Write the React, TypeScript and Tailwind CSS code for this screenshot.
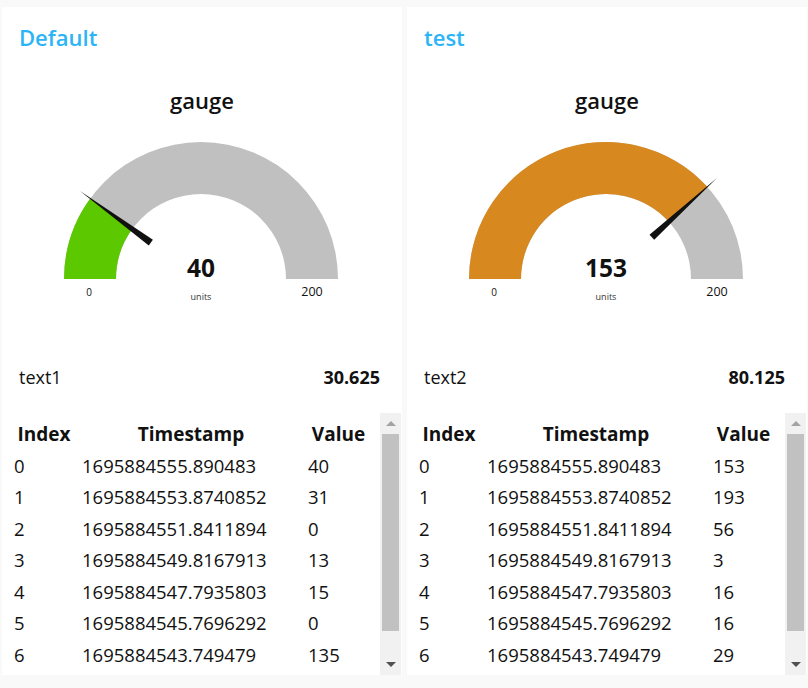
import React from 'react';

type Row = { index: number; ts: string; value: number };

type Panel = {
  title: string;
  value: number;
  color: string;
  label: string;
  reading: string;
  rows: Row[];
};

const stamps = [
  '1695884555.890483',
  '1695884553.8740852',
  '1695884551.8411894',
  '1695884549.8167913',
  '1695884547.7935803',
  '1695884545.7696292',
  '1695884543.749479',
];

const panels: Panel[] = [
  {
    title: 'Default',
    value: 40,
    color: '#5cc800',
    label: 'text1',
    reading: '30.625',
    rows: [40, 31, 0, 13, 15, 0, 135].map((v, i) => ({ index: i, ts: stamps[i], value: v })),
  },
  {
    title: 'test',
    value: 153,
    color: '#d78920',
    label: 'text2',
    reading: '80.125',
    rows: [153, 193, 56, 3, 16, 16, 29].map((v, i) => ({ index: i, ts: stamps[i], value: v })),
  },
];

const font = { fontFamily: '"Open Sans", "Noto Sans", sans-serif' };

const Gauge: React.FC<{ value: number; color: string }> = ({ value, color }) => {
  const cx = 199;
  const cy = 146;
  const R = 137;
  const r = 85;
  const arc = (frac: number) => {
    const a = frac * Math.PI;
    const ox = cx - R * Math.cos(a);
    const oy = cy - R * Math.sin(a);
    const ix = cx - r * Math.cos(a);
    const iy = cy - r * Math.sin(a);
    return `M ${cx - R} ${cy} A ${R} ${R} 0 0 1 ${ox} ${oy} L ${ix} ${iy} A ${r} ${r} 0 0 0 ${cx - r} ${cy} Z`;
  };
  const frac = value / 200;
  const a = frac * Math.PI;
  const ux = -Math.cos(a);
  const uy = -Math.sin(a);
  const px = -uy;
  const py = ux;
  const b = 62;
  const t = 150;
  const w = 3.5;
  const needle = [
    [cx + ux * b + px * w, cy + uy * b + py * w],
    [cx + ux * b - px * w, cy + uy * b - py * w],
    [cx + ux * t, cy + uy * t],
  ]
    .map((p) => p.join(','))
    .join(' ');

  return (
    <svg width="400" height="220" viewBox="0 0 400 220" className="block">
      <path d={arc(1)} fill="#c0c0c0" />
      <path d={arc(frac)} fill={color} />
      <polygon points={needle} fill="#111" />
      <text x={cx} y={137.5} textAnchor="middle" dominantBaseline="middle" fontSize="24.5" fontWeight="700" fill="#111" style={font}>
        {value}
      </text>
      <text x={87} y={160} textAnchor="middle" dominantBaseline="middle" fontSize="10" fill="#111" style={font}>
        0
      </text>
      <text x={cx} y={164.5} textAnchor="middle" dominantBaseline="middle" fontSize="9" fill="#333" style={font}>
        units
      </text>
      <text x={310} y={159.5} textAnchor="middle" dominantBaseline="middle" fontSize="12.5" fill="#111" style={font}>
        200
      </text>
    </svg>
  );
};

const Scrollbar: React.FC = () => (
  <div className="w-[21px] h-full bg-[#f1f1f1] flex flex-col items-center">
    <div className="h-[21px] w-full flex items-center justify-center">
      <div className="w-0 h-0 border-l-[5px] border-r-[5px] border-b-[5px] border-l-transparent border-r-transparent border-b-[#a3a3a3]" />
    </div>
    <div className="w-[17px] h-[197px] bg-[#c1c1c1]" />
    <div className="flex-1" />
    <div className="h-[22px] w-full flex items-center justify-center">
      <div className="w-0 h-0 border-l-[5px] border-r-[5px] border-t-[5px] border-l-transparent border-r-transparent border-t-[#505050]" />
    </div>
  </div>
);

const Card: React.FC<{ panel: Panel }> = ({ panel }) => (
  <div className="w-[400px] h-[668px] bg-white flex flex-col text-[#111]">
    <div className="h-[60px] px-[17px] flex items-center">
      <span className="text-[22px] font-semibold text-[#2cb5f6]">{panel.title}</span>
    </div>
    <div className="h-[66px] flex items-center justify-center">
      <span className="text-[22px] font-semibold">gauge</span>
    </div>
    <Gauge value={panel.value} color={panel.color} />
    <div className="h-[48px] pl-[17px] pr-[22px] flex items-center justify-between text-[18px]">
      <span>{panel.label}</span>
      <span className="font-bold">{panel.reading}</span>
    </div>
    <div className="mt-[12px] h-[262px] flex">
      <div className="flex-1 pl-[8px] pt-[6px] overflow-hidden">
        <table className="table-fixed w-[363px] text-[18.5px]">
          <colgroup>
            <col className="w-[68px]" />
            <col className="w-[226px]" />
            <col className="w-[69px]" />
          </colgroup>
          <thead>
            <tr className="h-[31px] text-[19px]">
              <th className="font-bold text-center p-0">Index</th>
              <th className="font-bold text-center p-0">Timestamp</th>
              <th className="font-bold text-center p-0">Value</th>
            </tr>
          </thead>
          <tbody>
            {panel.rows.map((row) => (
              <tr key={row.index} className="h-[31.5px]">
                <td className="px-[4px] py-0">{row.index}</td>
                <td className="px-[4px] py-0">{row.ts}</td>
                <td className="px-[4px] py-0">{row.value}</td>
              </tr>
            ))}
          </tbody>
        </table>
      </div>
      <Scrollbar />
      <div className="w-[1px]" />
    </div>
  </div>
);

export default function App() {
  return (
    <div className="w-[808px] h-[688px] bg-[#f9f9f9] pl-[2px] pt-[7px] flex gap-[5px]" style={font}>
      {panels.map((p) => (
        <Card key={p.title} panel={p} />
      ))}
    </div>
  );
}
